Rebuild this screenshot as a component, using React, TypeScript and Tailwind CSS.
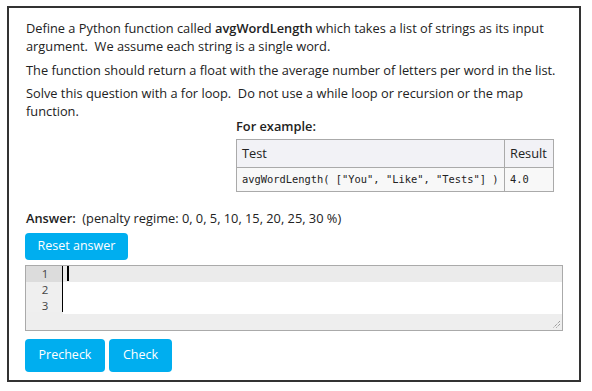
export default function App() {
  return (
    <div className="w-[592px] h-[391px] bg-white pt-[6px] pl-[7px]" style={{ fontFamily: '"Open Sans", sans-serif' }}>
      <div className="w-[574px] h-[376px] border-2 border-[#333] px-[16px] pt-[11px] text-[#222]">
        {/* Question text */}
        <div className="text-[12.8px] leading-[18px] pl-[1px]">
          <p>
            Define a Python function called <b className="font-semibold">avgWordLength</b> which takes a list of strings as its input
            argument.&nbsp; We assume each string is a single word.
          </p>
          <p className="mt-[6px]">The function should return a float with the average number of letters per word in the list.</p>
          <p className="mt-[5px]">
            Solve this question with a for loop.&nbsp; Do not use a while loop or recursion or the map function.
          </p>
        </div>

        {/* Example */}
        <div className="ml-[211px]">
          <div className="text-[12.8px] font-semibold leading-[12px]">For example:</div>
          <table className="mt-[7px] border-collapse border border-[#aaa] text-[12.8px]">
            <thead>
              <tr className="bg-[#f2f2f6]">
                <th className="border border-[#aaa] text-left font-normal px-[5px] h-[28px] w-[268px]">Test</th>
                <th className="border border-[#aaa] text-left font-normal px-[5px] h-[28px] w-[49px]">Result</th>
              </tr>
            </thead>
            <tbody>
              <tr className="bg-[#f8f8f8]">
                <td className="border border-[#aaa] px-[5px] h-[24px] text-[10.4px]" style={{ fontFamily: '"DejaVu Sans Mono", monospace' }}>
                  avgWordLength( ["You", "Like", "Tests"] )
                </td>
                <td className="border border-[#aaa] px-[5px] h-[24px] text-[10.4px]" style={{ fontFamily: '"DejaVu Sans Mono", monospace' }}>
                  4.0
                </td>
              </tr>
            </tbody>
          </table>
        </div>

        {/* Answer */}
        <div className="mt-[17px] text-[12.8px] leading-[18px] pl-[1px]">
          <span className="font-semibold">Answer:</span>&nbsp; (penalty regime: 0, 0, 5, 10, 15, 20, 25, 30 %)
        </div>
        <button className="mt-[6px] h-[27px] w-[103px] rounded-[4px] bg-[#00aeef] text-white text-[12.5px]">Reset answer</button>

        {/* Editor */}
        <div className="mt-[5px] w-[538px] h-[66px] border border-[#aaa] bg-[#eeeeee] relative">
          <div className="flex h-[48px]">
            <div className="w-[37px] bg-[#efefef] text-[11.5px] leading-[16px] text-[#444] border-r border-black mb-[2px]">
              <div className="bg-[#dcdcdc] text-center pl-[2px]">1</div>
              <div className="text-center pl-[2px]">2</div>
              <div className="text-center pl-[2px]">3</div>
            </div>
            <div className="flex-1 bg-white">
              <div className="h-[16px] bg-[#ebebeb] pl-[4px]">
                <div className="w-[2px] h-[15px] bg-black" />
              </div>
            </div>
          </div>
          <svg className="absolute right-[1px] bottom-[1px]" width="10" height="10" viewBox="0 0 10 10">
            <line x1="9" y1="2" x2="2" y2="9" stroke="#777" strokeWidth="1" strokeDasharray="1 1" />
            <line x1="9" y1="5" x2="5" y2="9" stroke="#777" strokeWidth="1" strokeDasharray="1 1" />
          </svg>
        </div>

        <div className="mt-[8px] flex gap-[4px]">
          <button className="h-[33px] w-[80px] rounded-[4px] bg-[#00aeef] text-white text-[12.5px]">Precheck</button>
          <button className="h-[33px] w-[63px] rounded-[4px] bg-[#00aeef] text-white text-[12.5px]">Check</button>
        </div>
      </div>
    </div>
  );
}
